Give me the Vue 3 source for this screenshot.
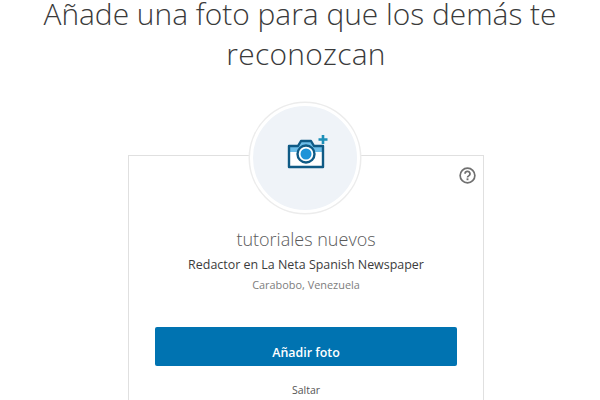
<script setup>
const profile = {
  name: 'tutoriales nuevos',
  headline: 'Redactor en La Neta Spanish Newspaper',
  location: 'Carabobo, Venezuela'
}
</script>

<template>
  <div class="page">
    <h1 class="title">Añade una foto para que los demás te <span class="title-end">reconozcan</span></h1>

    <div class="photo-step">
      <div class="avatar">
        <svg class="camera" width="42" height="38" viewBox="0 0 42 38">
          <path d="M2 13h9l3-5h10l3 5h9v21H2z" fill="#fff" />
          <path d="M2 13h9l3-5h10l3 5h9v6H2z" fill="#6cbde8" />
          <path d="M2 13h9l3-5h10l3 5h9v21H2z" fill="none" stroke="#0f5a85" stroke-width="2.4" stroke-linejoin="round" />
          <circle cx="19" cy="21" r="8.500" fill="#fff" stroke="#0f5a85" stroke-width="2.4" />
          <circle cx="19" cy="21" r="5.500" fill="#1d93d8" />
          <path d="M36 2v9M31.500 6.500h9" stroke="#1c8fb8" stroke-width="2.600" fill="none" />
        </svg>
      </div>

      <div class="card">
        <div class="help-row">
          <svg class="help" width="17" height="17" viewBox="0 0 18 18">
            <circle cx="9" cy="9" r="7.800" fill="none" stroke="#707070" stroke-width="1.800" />
            <path d="M6.400 7.200a2.600 2.600 0 1 1 3.900 2.200c-.9.500-1.300 1-1.300 1.700" fill="none" stroke="#707070" stroke-width="1.800" />
            <rect x="8" y="12" width="2" height="2" fill="#707070" />
          </svg>
        </div>
        <p class="name">{{ profile.name }}</p>
        <p class="headline">{{ profile.headline }}</p>
        <p class="location">{{ profile.location }}</p>
        <button class="add-btn">Añadir foto</button>
        <a class="skip">Saltar</a>
      </div>
    </div>
  </div>
</template>

<style scoped>
.page {
  width: 600px;
  height: 400px;
  overflow: hidden;
  background: #fff;
  font-family: "Open Sans", "Liberation Sans", sans-serif;
}

.title {
  margin: -6px auto 0;
  width: 560px;
  font-size: 29.900px;
  font-weight: 300;
  line-height: 40px;
  text-align: center;
  color: #3a3a3a;
}

.title-end {
  display: inline-block;
  padding-left: 12px;
  letter-spacing: 0.3px;
}

.photo-step {
  box-sizing: border-box;
  width: 356px;
  margin: 29px 0 0 128px;
  display: flex;
  flex-direction: column;
  align-items: center;
}

.avatar {
  position: relative;
  z-index: 1;
  width: 104px;
  height: 104px;
  margin: 0 3px -58px 0;
  display: flex;
  align-items: center;
  justify-content: center;
  border-radius: 50%;
  background: #eff3f8;
  border: 3px solid #fff;
  box-shadow: 0 0 0 1.500px #ececec;
}

.camera {
  margin: -12px 0 0 6px;
}

.card {
  box-sizing: border-box;
  width: 100%;
  height: 260px;
  padding: 0 26px;
  display: flex;
  flex-direction: column;
  align-items: center;
  background: #fff;
  border: 1px solid #e0e0e0;
  border-bottom: none;
}

.help-row {
  box-sizing: border-box;
  align-self: stretch;
  height: 28px;
  padding-top: 11px;
  margin: 0 -19px 43px 0;
  display: flex;
  justify-content: flex-end;
}

.name {
  margin: 0;
  font-size: 18px;
  font-weight: 300;
  line-height: 24px;
  color: #5a5a5a;
}

.headline {
  margin: 5px 0 0;
  font-size: 12.450px;
  line-height: 17px;
  color: #3c3c3c;
}

.location {
  margin: 4px 0 0;
  font-size: 10.900px;
  line-height: 16px;
  color: #7d7d7d;
}

.add-btn {
  width: 302px;
  height: 39px;
  margin-top: 34px;
  padding-top: 12px;
  border: none;
  border-radius: 2px;
  background: #0073b1;
  color: #fff;
  font-family: inherit;
  font-size: 12.400px;
  font-weight: 600;
}

.skip {
  margin-top: 16px;
  font-size: 10.500px;
  line-height: 16px;
  color: #555;
}
</style>
